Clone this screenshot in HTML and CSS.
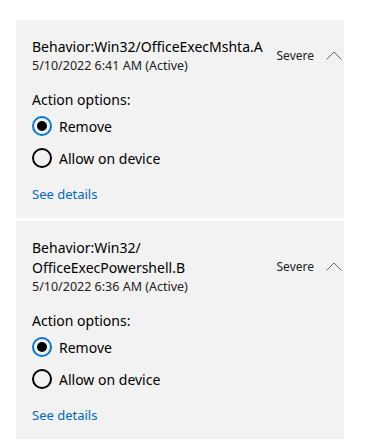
FILE: index.html
```html
<!DOCTYPE html>
<html lang="en">
<head>
  <meta charset="UTF-8" />
  <title>Current threats</title>
  <link rel="stylesheet" href="styles.css">
</head>
<body>
  <div class="threat-list">
    <!-- first threat -->
    <div class="threat">
      <div class="threat-head">
        <div class="threat-info">
          <div class="threat-name">Behavior:Win32/OfficeExecMshta.A</div>
          <div class="threat-date">5/10/2022 6:41 AM (Active)</div>
        </div>
        <span class="threat-level">Severe</span>
        <svg class="chevron" width="16" height="9" viewBox="0 0 16 9">
          <path d="M0.5 8.5 L8 1 L15.5 8.5" fill="none" stroke="#666" stroke-width="1" />
        </svg>
      </div>
      <div class="threat-body">
        <div class="options-label">Action options:</div>
        <label class="option"><span class="radio checked"></span>Remove</label>
        <label class="option"><span class="radio"></span>Allow on device</label>
        <a class="details" href="#">See details</a>
      </div>
    </div>

    <!-- second threat -->
    <div class="threat">
      <div class="threat-head">
        <div class="threat-info">
          <div class="threat-name">Behavior:Win32/<wbr>OfficeExecPowershell.B</div>
          <div class="threat-date">5/10/2022 6:36 AM (Active)</div>
        </div>
        <span class="threat-level">Severe</span>
        <svg class="chevron" width="16" height="9" viewBox="0 0 16 9">
          <path d="M0.5 8.5 L8 1 L15.5 8.5" fill="none" stroke="#666" stroke-width="1" />
        </svg>
      </div>
      <div class="threat-body">
        <div class="options-label">Action options:</div>
        <label class="option"><span class="radio checked"></span>Remove</label>
        <label class="option"><span class="radio"></span>Allow on device</label>
        <a class="details" href="#">See details</a>
      </div>
    </div>
  </div>
</body>
</html>
```

FILE: styles.css
```css
body {
  margin: 0;
  background: #ffffff;
  font-family: 'Noto Sans', 'Open Sans', sans-serif;
  color: #000000;
}

.threat-list {
  margin: 20px 0 0 16px;
  width: 328px;
  display: flex;
  flex-direction: column;
  gap: 3px;
}

.threat {
  background: #f2f2f2;
  padding: 17px 2px 14px 16px;
}

.threat-head {
  display: flex;
  align-items: center;
}

.threat-info {
  flex: 1;
  max-width: 240px;
}

.threat-name {
  font-size: 14px;
  line-height: 20px;
}

.threat-date {
  font-size: 12.5px;
  line-height: 17px;
  color: #222;
}

.threat-level {
  margin-left: auto;
  font-size: 12px;
  color: #222;
}

.chevron {
  margin-left: 12px;
  display: block;
}

.threat-body {
  margin-top: 16px;
  display: flex;
  flex-direction: column;
  align-items: flex-start;
}

.options-label {
  font-size: 14px;
  line-height: 20px;
}

.option {
  display: flex;
  align-items: center;
  height: 32px;
  font-size: 14px;
  gap: 7px;
}

.radio {
  width: 20px;
  height: 20px;
  box-sizing: border-box;
  border: 2px solid #000;
  border-radius: 50%;
  display: flex;
  align-items: center;
  justify-content: center;
}

.radio.checked {
  border-color: #0078d4;
}

.radio.checked::after {
  content: "";
  width: 10px;
  height: 10px;
  border-radius: 50%;
  background: #000;
}

.details {
  margin-top: 10px;
  font-size: 13px;
  line-height: 20px;
  color: #0067c0;
  text-decoration: none;
}
```
